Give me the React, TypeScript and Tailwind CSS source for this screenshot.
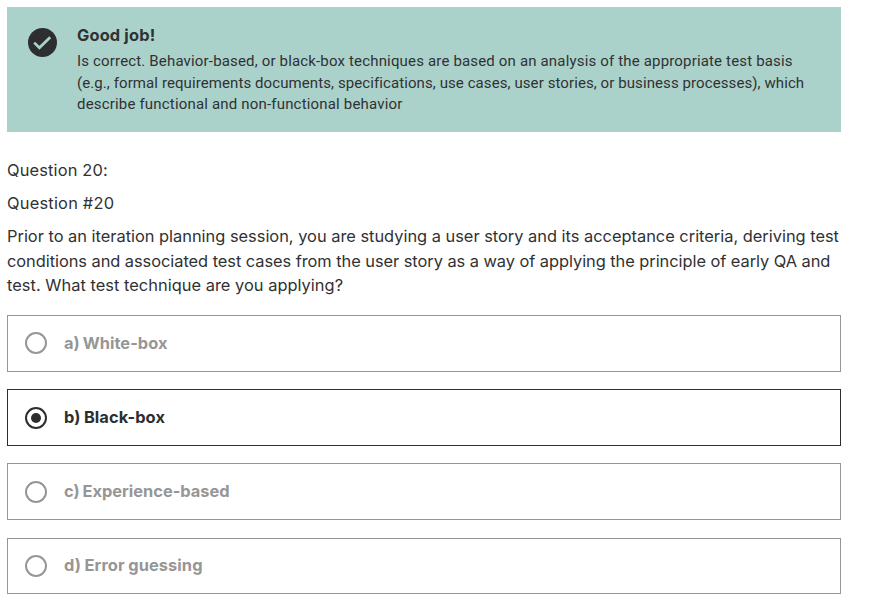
import React from "react";

type Option = { label: string; selected?: boolean; box: string; text: string };

const options: Option[] = [
  { label: "a) White-box", box: "mb-[17px] h-[57px] pb-px", text: "tracking-[0.04px] [word-spacing:-1px]" },
  { label: "b) Black-box", selected: true, box: "mb-[17px] h-[57px]", text: "pb-0.5 tracking-[0.1px] [word-spacing:-0.6px]" },
  { label: "c) Experience-based", box: "mb-[18px] h-[57px] pt-px", text: "pb-0.5 [word-spacing:-1px]" },
  { label: "d) Error guessing", box: "h-[56px]", text: "pb-0.5 tracking-[0.08px] [word-spacing:-0.4px]" },
];

function Radio({ selected }: { selected?: boolean }) {
  return (
    <span
      className={`flex size-[22px] shrink-0 items-center justify-center rounded-full border-2 ${
        selected ? "border-[#2d2e30]" : "border-[#969696]"
      }`}
    >
      {selected && <span className="size-[10px] rounded-full bg-[#2d2e30]" />}
    </span>
  );
}

export default function App() {
  return (
    <main className="h-[607px] w-[880px] overflow-hidden bg-white pt-[7px] pl-[7px] font-['Inter','Liberation_Sans',sans-serif] text-[#303133]">
      <section className="flex h-[125px] w-[834px] bg-[#abd2ca] pl-[21px]">
        <svg className="mt-[21px] size-[29px] shrink-0" viewBox="0 0 29 29" fill="none">
          <circle cx="14.5" cy="14.5" r="14.5" fill="#2d2e30" />
          <path d="M6.2 14.6L11.4 19.8L22.2 9.2" stroke="#abd2ca" strokeWidth="2.7" />
        </svg>
        <div className="ml-5 whitespace-nowrap">
          <h2 className="mt-4 text-[16.4px] leading-[24px] font-bold tracking-[0.15px]">Good job!</h2>
          <div className="mt-1 font-['Roboto','Liberation_Sans',sans-serif] text-[15px] leading-[21.6px]">
            <p className="tracking-[0.165px]">Is correct. Behavior-based, or black-box techniques are based on an analysis of the appropriate test basis</p>
            <p className="tracking-[0.09px]">(e.g., formal requirements documents, specifications, use cases, user stories, or business processes), which</p>
            <p className="tracking-[0.18px]">describe functional and non-functional behavior</p>
          </div>
        </div>
      </section>

      <section className="mt-[26px] text-[16.4px] leading-[24.5px] whitespace-nowrap">
        <p className="tracking-[0.16px]">Question 20:</p>
        <p className="mt-[8.5px] tracking-[0.22px]">Question #20</p>
        <div className="mt-[8.5px]">
          <p className="tracking-[-0.005px]">Prior to an iteration planning session, you are studying a user story and its acceptance criteria, deriving test</p>
          <p className="tracking-[-0.045px]">conditions and associated test cases from the user story as a way of applying the principle of early QA and</p>
          <p className="tracking-[0.03px]">test. What test technique are you applying?</p>
        </div>
      </section>

      <div className="mt-[17.5px] w-[834px]">
        {options.map((o) => (
          <div
            key={o.label}
            className={`flex items-center border pl-[17px] ${o.box} ${
              o.selected ? "border-[#2d2e30] text-[#2d2e30]" : "border-[#969696] text-[#969696]"
            }`}
          >
            <Radio selected={o.selected} />
            <span className={`ml-[17px] text-[16.4px] leading-6 font-bold ${o.text}`}>{o.label}</span>
          </div>
        ))}
      </div>
    </main>
  );
}
